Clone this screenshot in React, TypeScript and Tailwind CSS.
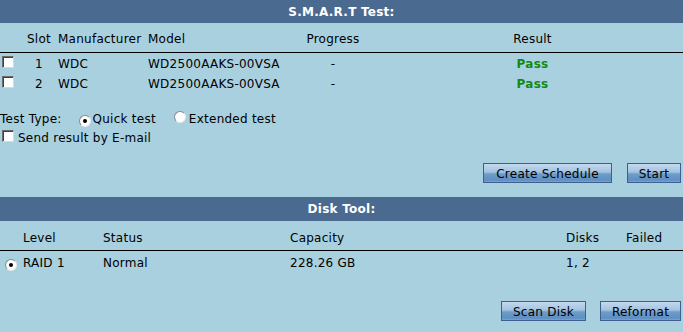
const disks = [
  { slot: 1, maker: "WDC", model: "WD2500AAKS-00VSA", progress: "-", result: "Pass" },
  { slot: 2, maker: "WDC", model: "WD2500AAKS-00VSA", progress: "-", result: "Pass" },
];

function Checkbox() {
  return (
    <span className="inline-block h-[12px] w-[12px] shrink-0 border border-t-[#6b6b6b] border-l-[#6b6b6b] border-b-[#d8d8d8] border-r-[#d8d8d8] bg-white shadow-[inset_1px_1px_0_#404040]" />
  );
}

function Radio({ checked = false }: { checked?: boolean }) {
  return (
    <span className="relative inline-flex h-[12px] w-[12px] shrink-0 items-center justify-center rounded-full border border-[#8a8a8a] border-b-[#e8e8e8] border-r-[#e8e8e8] bg-white">
      {checked && <span className="h-[4px] w-[4px] rounded-full bg-black" />}
    </span>
  );
}

function Button({ label, width }: { label: string; width: string }) {
  return (
    <button
      className={`${width} flex h-[20px] items-center justify-center border border-[#3f5f8f] bg-[linear-gradient(to_bottom,#c4d9ee_0%,#a3c2df_45%,#6f9dca_55%,#5d8fc2_90%,#7aa6d0_100%)] pt-[1px] text-[12px] text-black`}
    >
      {label}
    </button>
  );
}

function SectionBar({ title, height }: { title: string; height: string }) {
  return (
    <div className={`${height} flex items-center justify-center bg-[#4b6a90] text-[12px] font-bold text-white`}>
      {title}
    </div>
  );
}

export default function App() {
  return (
    <div className="h-[332px] w-[683px] overflow-hidden bg-[#a9d0df] font-['DejaVu_Sans',Verdana,sans-serif] text-[12px] tracking-[0.25px] text-black">
      <SectionBar title="S.M.A.R.T Test:" height="h-[23px]" />

      <div className="grid h-[29px] grid-cols-[24px_30px_94px_142px_86px_64px_185px_1fr] items-center pt-[2px]">
        <span />
        <span className="text-center">Slot</span>
        <span className="pl-[4px]">Manufacturer</span>
        <span>Model</span>
        <span className="text-center">Progress</span>
        <span />
        <span className="text-center">Result</span>
        <span />
      </div>
      <div className="h-[1px] bg-black" />

      {disks.map((d) => (
        <div
          key={d.slot}
          className="grid h-[20px] grid-cols-[24px_30px_94px_142px_86px_64px_185px_1fr] items-center pt-[2px]"
        >
          <span className="pl-[2px]">
            <Checkbox />
          </span>
          <span className="text-center">{d.slot}</span>
          <span className="pl-[4px]">{d.maker}</span>
          <span>{d.model}</span>
          <span className="text-center">{d.progress}</span>
          <span />
          <span className="text-center font-bold text-[#138a13]">{d.result}</span>
          <span />
        </div>
      ))}

      <div className="mt-[15px] flex h-[18px] items-center pt-[4px]">
        <span>Test Type:</span>
        <span className="ml-[17px] mr-[2px]">
          <Radio checked />
        </span>
        <span>Quick test</span>
        <span className="ml-[18px] mr-[3px]">
          <Radio />
        </span>
        <span>Extended test</span>
      </div>
      <div className="flex h-[20px] items-center gap-[4px] pl-[2px]">
        <Checkbox />
        <span className="pt-[4px]">Send result by E-mail</span>
      </div>

      <div className="mt-[17px] flex justify-end gap-[15px] pr-[2px]">
        <Button label="Create Schedule" width="w-[129px]" />
        <Button label="Start" width="w-[54px]" />
      </div>

      <div className="mt-[14px]">
        <SectionBar title="Disk Tool:" height="h-[24px]" />
      </div>

      <div className="grid h-[29px] grid-cols-[23px_80px_187px_276px_60px_1fr] items-center pt-[4px]">
        <span />
        <span>Level</span>
        <span>Status</span>
        <span>Capacity</span>
        <span>Disks</span>
        <span>Failed</span>
      </div>
      <div className="h-[1px] bg-black" />
      <div className="grid h-[22px] grid-cols-[23px_80px_187px_276px_60px_1fr] items-center pt-[2px]">
        <span className="pl-[5px]">
          <Radio checked />
        </span>
        <span>RAID 1</span>
        <span>Normal</span>
        <span>228.26 GB</span>
        <span>1, 2</span>
        <span />
      </div>

      <div className="mt-[28px] flex justify-end gap-[14px] pr-[2px]">
        <Button label="Scan Disk" width="w-[85px]" />
        <Button label="Reformat" width="w-[81px]" />
      </div>
    </div>
  );
}
